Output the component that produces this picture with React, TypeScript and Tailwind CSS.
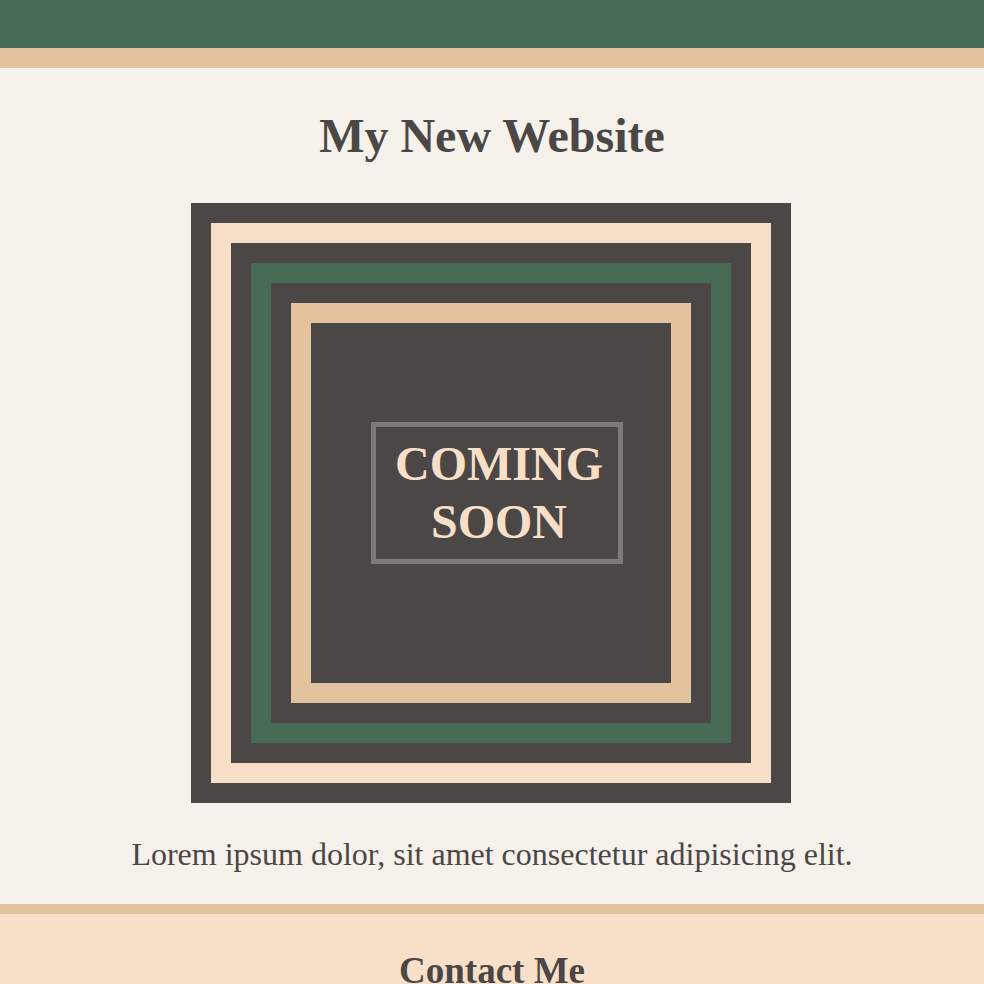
import React from 'react'

const serif = { fontFamily: '"Liberation Serif", "Times New Roman", serif' }

export default function App() {
  return (
    <div className="min-h-screen bg-[#f6f1ea] text-[#4b4746]" style={ serif }>
      <header className="h-[68px] bg-[#476a55] border-b-[20px] border-[#e3c39e]"/>

      <main className="flex flex-col items-center">
        <h1 className="mt-[41px] mb-[41px] text-[48px] font-bold leading-[53px]">My New Website</h1>

        <div className="w-[600px] h-[600px] p-[20px] bg-[#4b4746] mr-[2px]">
          <div className="h-full p-[20px] bg-[#f8dfc8]">
            <div className="h-full p-[20px] bg-[#4b4746]">
              <div className="h-full p-[20px] bg-[#476a55]">
                <div className="h-full p-[20px] bg-[#4b4746]">
                  <div className="h-full p-[20px] bg-[#e3c39e]">
                    <div className="h-full bg-[#4b4746] pl-[60px] pt-[99px]">
                      <div className="w-[252px] h-[142px] border-[5px] border-[#7b7b7b] flex flex-col justify-center items-center">
                        <p className="text-[48px] font-bold leading-[58px] text-[#f8dfc8] text-center pl-[4px]">COMING<br/>SOON</p>
                      </div>
                    </div>
                  </div>
                </div>
              </div>
            </div>
          </div>
        </div>

        <p className="mt-[33px] mb-[32px] text-[32px] leading-[36px]">Lorem ipsum dolor, sit amet consectetur adipisicing elit.</p>
      </main>

      <footer className="bg-[#f8dfc8] border-t-[10px] border-[#e3c39e] pt-[36px] pb-[40px] text-center">
        <h2 className="text-[37px] font-bold leading-[41px]">Contact Me</h2>
      </footer>
    </div>
  )
}
